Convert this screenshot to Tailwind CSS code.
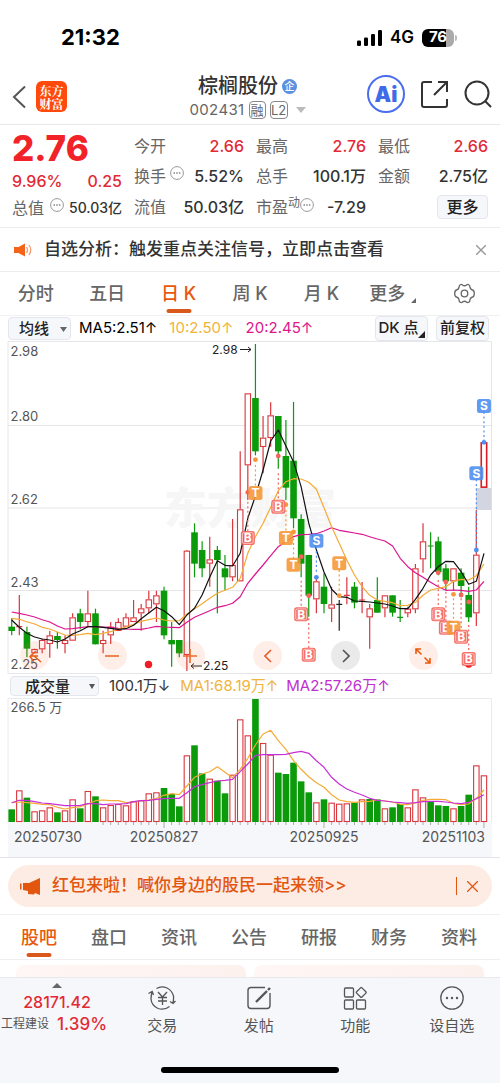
<!DOCTYPE html>
<html lang="zh-CN">
<head>
<meta charset="utf-8">
<meta name="viewport" content="width=device-width, initial-scale=1">
<title>棕榈股份 002431</title>
<script src="https://cdn.jsdelivr.net/npm/@tailwindcss/browser@4"></script>
</head>
<body class="bg-white font-['Inter','Noto_Sans_CJK_SC',sans-serif] text-[#333]">
<div class="flex min-h-screen flex-col">

  <!-- Status bar -->
  <div class="flex h-[75px] items-center justify-between pr-[43px] pl-[61px] text-black">
    <span class="text-[22px] font-bold">21:32</span>
    <div class="flex items-center gap-2">
      <svg class="h-4 w-[25px]" viewBox="0 0 25 16"><rect x="0" y="10.500" width="4" height="5.500" rx="1.300"/><rect x="7" y="7.500" width="4" height="8.500" rx="1.300"/><rect x="14" y="4" width="4" height="12" rx="1.300"/><rect x="21" y="0" width="4" height="16" rx="1.300"/></svg>
      <span class="text-[17px] font-semibold">4G</span>
      <div class="flex items-center gap-px">
        <span class="flex h-[18px] w-8 items-center justify-center rounded-md bg-linear-to-r from-black from-76% to-[#aaa] to-76% text-[15px] font-bold text-white">76</span>
        <span class="h-1.5 w-0.5 rounded-r bg-[#bbb]"></span>
      </div>
    </div>
  </div>

  <!-- Title bar -->
  <header class="flex h-[50px] items-start justify-between border-b border-[#e8e8ec] pr-2 pl-3">
    <div class="flex w-[116px] items-center gap-2.5 pt-1.5">
      <button aria-label="返回"><svg class="h-6 w-3.5" viewBox="0 0 14 24" fill="none" stroke="#555" stroke-width="2"><path d="M13 1.500 2 12l11 10.500"/></svg></button>
      <a href="#" class="flex size-[31px] flex-col items-center justify-center rounded-md bg-[#ff4a0c] font-['Noto_Serif_CJK_SC','Noto_Sans_CJK_SC',serif] text-[12px] leading-[13px] font-bold text-white"><span>东方</span><span>财富</span></a>
    </div>
    <div class="flex flex-col items-center">
      <h1 class="flex items-center gap-1 text-xl leading-[22px] font-medium">棕榈股份<span class="flex size-[15px] items-center justify-center rounded-full bg-[#5b8fe0] text-[10px] leading-none text-white">企</span></h1>
      <div class="mt-1 flex items-center gap-1 text-[15px] leading-[18px] text-[#666]"><span class="tracking-wide">002431</span>
        <span class="flex h-[18px] w-[17px] items-center justify-center rounded-sm border border-[#888] text-[13px]">融</span><span class="flex h-[18px] w-[18px] items-center justify-center rounded-sm border border-[#888] text-[13px]">L2</span>
        <svg class="ml-1 h-1.5 w-2.5" viewBox="0 0 10 6" fill="#bbb"><path d="M0 0h10L5 6z"/></svg>
      </div>
    </div>
    <div class="flex items-center gap-4">
      <button aria-label="Ai 助手" class="flex size-[38px] items-center justify-center rounded-full border-2 border-[#4a6df0] text-[21px] leading-none font-black text-[#3f6ae8]">Ai</button>
      <button aria-label="分享"><svg class="size-[27px]" viewBox="0 0 27 27" fill="none" stroke="#333" stroke-width="2"><path d="M11 1H3Q1 1 1 3v21q0 2 2 2h21q2 0 2-2v-6M17 1h9v10M26 1 13 14"/></svg></button>
      <button aria-label="搜索"><svg class="size-7" viewBox="0 0 28 28" fill="none" stroke="#333" stroke-width="2"><circle cx="13" cy="13" r="11.500"/><path d="m21 21 6 6"/></svg></button>
    </div>
  </header>

  <!-- Quote -->
  <section class="grid h-[103px] grid-cols-4 gap-3 border-b border-[#ececf0] px-3 pt-1 text-base text-[#333]">
    <div>
      <div class="flex h-[38px] items-center text-[35px] leading-none font-extrabold text-[#f12228]">2.76</div>
      <div class="flex h-[27px] items-center justify-between font-medium text-[#e22a35]"><span>9.96%</span><span>0.25</span></div>
      <div class="flex h-[27px] items-center justify-between whitespace-nowrap"><span class="text-[#666]">总值</span><svg class="mb-1.5 size-3.5" viewBox="0 0 14 14"><circle cx="7" cy="7" r="6.400" fill="none" stroke="#999"/><path d="M3.500 7h1.500m1.200 0h1.500m1.200 0h1.500" stroke="#888" stroke-width="1.400"/></svg><span class="text-[14px] font-medium">50.03亿</span></div>
    </div>
    <div>
      <div class="flex h-[33px] items-center justify-between"><span class="text-[#666]">今开</span><span class="font-medium text-[#e22a35]">2.66</span></div>
      <div class="flex h-7 items-center justify-between"><span class="flex items-center gap-1 text-[#666]">换手<svg class="mb-1.5 size-3.5" viewBox="0 0 14 14"><circle cx="7" cy="7" r="6.400" fill="none" stroke="#999"/><path d="M3.500 7h1.500m1.200 0h1.500m1.200 0h1.500" stroke="#888" stroke-width="1.400"/></svg></span><span class="font-medium">5.52%</span></div>
      <div class="flex h-[33px] items-center justify-between"><span class="text-[#666]">流值</span><span class="font-medium">50.03亿</span></div>
    </div>
    <div>
      <div class="flex h-[33px] items-center justify-between"><span class="text-[#666]">最高</span><span class="font-medium text-[#e22a35]">2.76</span></div>
      <div class="flex h-7 items-center justify-between"><span class="text-[#666]">总手</span><span class="font-medium">100.1万</span></div>
      <div class="flex h-[33px] items-center justify-between"><span class="flex items-center text-[#666]">市盈<span class="mb-2 text-[12px] leading-none">动</span><svg class="mb-1 size-3.5" viewBox="0 0 14 14"><circle cx="7" cy="7" r="6.400" fill="none" stroke="#999"/><path d="M3.500 7h1.500m1.200 0h1.500m1.200 0h1.500" stroke="#888" stroke-width="1.400"/></svg></span><span class="font-medium">-7.29</span></div>
    </div>
    <div>
      <div class="flex h-[33px] items-center justify-between"><span class="text-[#666]">最低</span><span class="font-medium text-[#e22a35]">2.66</span></div>
      <div class="flex h-7 items-center justify-between"><span class="text-[#666]">金额</span><span class="font-medium">2.75亿</span></div>
      <div class="flex h-[33px] items-center justify-end"><button class="h-6 w-[51px] rounded-sm border border-[#e4e6ee] bg-[#f6f7fb] leading-none font-medium text-[#222]">更多</button></div>
    </div>
  </section>

  <!-- Signal notice -->
  <section class="flex h-11 items-center border-b border-[#ececf0] px-3.5">
    <svg class="h-4 w-[18px]" viewBox="0 0 18 16"><path d="M0 5h4.500L11 1.500v13L4.500 11H0z" fill="#f4631a"/><path d="M12.500 5q2 3 0 6M15 3q3.400 5 0 10" fill="none" stroke="#f79a6a" stroke-width="1.300"/></svg>
    <a href="#" class="ml-3 text-[17px] font-medium text-[#333]">自选分析：触发重点关注信号，立即点击查看</a>
    <button aria-label="关闭" class="ml-auto"><svg class="size-2.5" viewBox="0 0 10 10" stroke="#999" stroke-width="1.400"><path d="m0 0 10 10M10 0 0 10"/></svg></button>
  </section>

  <!-- Period tabs -->
  <nav class="grid h-11 grid-cols-7 border-b border-[#f0f0f3] text-[18px] font-medium text-[#666]">
    <button>分时</button>
    <button>五日</button>
    <button class="relative text-[#e8590c]">日 K<span class="absolute bottom-0.5 left-1/2 h-1 w-[25px] -translate-x-1/2 rounded-full bg-[#d9591a]"></span></button>
    <button>周 K</button>
    <button>月 K</button>
    <button class="flex items-center justify-center gap-1.5">更多<svg class="mt-3.5 size-[5px]" viewBox="0 0 5 5" fill="#666"><path d="M5 0v5H0z"/></svg></button>
    <button aria-label="设置" class="flex items-center justify-center"><svg class="size-[21px]" viewBox="0 0 21 21" fill="none" stroke="#666" stroke-width="1.300"><path d="M6.200 1.800Q7.500 1 8.500 2q2 1.500 4 0 1-1 2.300-.200Q16 2.500 16 4.500q.5 2 2.500 2.500 1.800.500 1.800 3.500t-1.800 3.500q-2 .5-2.500 2.500 0 2-1.200 2.700-1.300.8-2.300-.2-2-1.500-4 0-1 1-2.300.2Q5 18.500 5 16.500 4.500 14.500 2.500 14 .700 13.500.700 10.500T2.500 7Q4.500 6.500 5 4.500q0-2 1.200-2.700z"/><circle cx="10.500" cy="10.500" r="3.300"/></svg></button>
  </nav>

  <!-- Moving average bar -->
  <div class="flex h-[25px] items-center pr-[11px] pl-2 text-[15px] whitespace-nowrap">
    <span class="relative">
      <select aria-label="指标" class="h-[23px] w-[63px] appearance-none rounded-sm border border-[#e4e6ee] bg-[#f6f7fb] pl-2.5 text-[15px] leading-none font-medium text-[#222]"><option>均线</option></select>
      <svg class="pointer-events-none absolute top-2.5 right-1 h-[5px] w-[7px]" viewBox="0 0 7 5" fill="#666"><path d="M0 0h7L3.500 5z"/></svg>
    </span>
    <span class="ml-2 text-black">MA5:2.51↑</span>
    <span class="ml-3 text-[#efb43c]">10:2.50↑</span>
    <span class="ml-3 text-[#e0158c]">20:2.45↑</span>
    <button class="relative ml-auto h-[25px] w-[53px] rounded-sm border border-[#e4e6ee] bg-[#f6f7fb] pr-1.5 font-medium text-[#222]">DK 点<svg class="absolute right-0.5 bottom-0.5 size-[7px]" viewBox="0 0 7 7" fill="#222"><path d="M7 0v7H0z"/></svg></button>
    <button class="ml-2 h-[25px] w-[53px] rounded-sm border border-[#e4e6ee] bg-[#f6f7fb] font-medium text-[#222]">前复权</button>
  </div>

  <!-- Candlestick chart -->
  <div class="relative">
    <svg id="kline" class="block w-full" viewBox="0 1 500 333" role="img" aria-label="日K线图" font-size="13"></svg>
    <div class="absolute right-[62px] bottom-1 left-5 flex justify-between">
      <button aria-label="重置" class="flex size-[29px] items-center justify-center rounded-full bg-[#f4713a]/12"><svg class="size-4" viewBox="0 0 16 16" fill="none" stroke="#e8590c" stroke-width="1.400"><path d="M9 3 3 8.500l4 5M3 8h8M7 8l7 6"/></svg></button>
      <button aria-label="缩小" class="flex size-[29px] items-center justify-center rounded-full bg-[#f4713a]/12"><span class="h-[2px] w-3.5 bg-[#ef8450]"></span></button>
      <button aria-label="放大" class="flex size-[29px] items-center justify-center rounded-full bg-[#f4713a]/12"><svg class="size-3.5" viewBox="0 0 14 14" stroke="#ef6a2a" stroke-width="1.600"><path d="M0 7h14M7 0v14"/></svg></button>
      <button aria-label="向左" class="flex size-[29px] items-center justify-center rounded-full bg-[#f4713a]/12"><svg class="h-3.5 w-2" viewBox="0 0 8 14" fill="none" stroke="#e0602a" stroke-width="1.600"><path d="M7 1 1 7l6 6"/></svg></button>
      <button aria-label="向右" class="flex size-[29px] items-center justify-center rounded-full bg-[#e8e8e8]/90"><svg class="h-3.5 w-2" viewBox="0 0 8 14" fill="none" stroke="#555" stroke-width="1.600"><path d="m1 1 6 6-6 6"/></svg></button>
      <button aria-label="全屏" class="flex size-[29px] items-center justify-center rounded-full bg-[#f4713a]/12"><svg class="size-4" viewBox="0 0 16 16" fill="none" stroke="#e8590c" stroke-width="1.600"><path d="M1 6V1h5M1 1l5.500 5.500M15 10v5h-5M15 15 9.500 9.500"/></svg></button>
    </div>
  </div>

  <!-- Volume bar -->
  <div class="flex h-6 items-center pl-2.5 text-[15px] whitespace-nowrap">
    <span class="relative">
      <select aria-label="副图指标" class="block h-5 w-[89px] appearance-none rounded-sm border border-[#e4e6ee] bg-[#f6f7fb] pl-3.5 text-[15px] leading-none font-medium text-[#222]"><option>成交量</option></select>
      <svg class="pointer-events-none absolute top-2 right-1 h-[5px] w-[6px]" viewBox="0 0 6 5" fill="#555"><path d="M0 0h6L3 5z"/></svg>
    </span>
    <span class="ml-2.5">100.1万↓</span>
    <span class="ml-2.5 text-[#efb43c]">MA1:68.19万↑</span>
    <span class="ml-2 text-[#c02fd0]">MA2:57.26万↑</span>
  </div>
  <svg id="volume" class="block w-full border-b border-[#e4e4e8]" viewBox="0 28 500 159" role="img" aria-label="成交量图" font-size="13"></svg>

  <!-- Promotion -->
  <div class="border-b border-[#efeff2] px-2 py-[7px]">
    <div class="flex h-[42px] items-center rounded-full bg-[#fdece4] pr-3.5 pl-3 text-[#e2560f]">
      <svg class="h-[17px] w-5" viewBox="0 0 20 17" fill="#e2560f"><path d="M0 5.500h1.500v6H0zM3 5h6l11-5v17l-5-2-1 1.500-6-.500V13l-5-1z"/></svg>
      <a href="#" class="ml-3 text-[17px] font-medium">红包来啦！喊你身边的股民一起来领&gt;&gt;</a>
      <span class="ml-auto h-[18px] w-px bg-[#e2560f]"></span>
      <button aria-label="关闭" class="ml-2.5"><svg class="size-[11px]" viewBox="0 0 11 11" stroke="#e2560f" stroke-width="1.300"><path d="m0 0 11 11M11 0 0 11"/></svg></button>
    </div>
  </div>

  <!-- Content tabs -->
  <nav class="grid h-[45px] grid-cols-7 border-b border-[#efeff2] pr-1.5 pl-1 text-[18px] font-medium text-[#666]">
    <button class="relative text-[#e8590c]">股吧<span class="absolute bottom-0.5 left-1/2 h-1 w-[25px] -translate-x-1/2 rounded-full bg-[#d9591a]"></span></button>
    <button>盘口</button>
    <button>资讯</button>
    <button>公告</button>
    <button>研报</button>
    <button>财务</button>
    <button>资料</button>
  </nav>
  <div class="grid h-[17px] grid-cols-2 gap-2 px-4 pt-[5px]">
    <div class="rounded-t-lg bg-linear-to-r from-[#fff7f5] to-[#fdf1ee]"></div>
    <div class="rounded-t-lg bg-linear-to-r from-[#fff7f5] to-[#fdf1ee]"></div>
  </div>

  <!-- Bottom bar -->
  <footer class="flex grow flex-col border-t border-[#e8e8ee] bg-[#f6f7fb]">
    <nav class="flex h-[58px] text-[15px] text-[#555]">
      <button class="flex w-[114px] flex-col items-center pt-[5px] whitespace-nowrap">
        <svg class="h-[5px] w-2.5" viewBox="0 0 10 5" fill="#666"><path d="M5 0l5 5H0z"/></svg>
        <span class="mt-1.5 text-[16px] leading-4 font-medium text-[#e22a35]">28171.42</span>
        <span class="mt-1.5 flex w-full items-center gap-2 pl-px text-[12px] leading-4">工程建设<span class="text-[17px] font-medium text-[#e22a35]">1.39%</span></span>
      </button>
      <button class="flex flex-1 flex-col items-center gap-1.5 pt-2"><svg class="h-6 w-7" viewBox="0 0 28 24" fill="none" stroke="#555" stroke-width="1.300"><path d="M8.500 2.500q5-3 10.500-.5 5 2.500 6.500 8 .3 3-.5 7M21.500 20.500q-5 4-11.500 2-6.500-3-7-9.500 0-4 1.200-7.500M.500 7.500 4.200 5.500 5.500 9M22 15.500l3 2 2.500-2.500M10 6l4.500 5L19 6M10 11.500h9M10 15h9M14.500 11v8"/></svg><span class="leading-5">交易</span></button>
      <button class="flex flex-1 flex-col items-center gap-1.5 pt-2"><svg class="size-6" viewBox="0 0 24 24" fill="none" stroke="#555" stroke-width="1.400"><path d="M18 1.500H4Q1 1.500 1 4.500v15q0 3 3 3h16q3 0 3-3V7"/><path d="M9 16 20 5" stroke-width="2.400"/><path d="m21 4 2-2" stroke-width="2.400"/></svg><span class="leading-5">发帖</span></button>
      <button class="flex flex-1 flex-col items-center gap-1.5 pt-2"><svg class="size-6" viewBox="0 0 24 24" fill="none" stroke="#555" stroke-width="1.300"><rect x="1.500" y="2" width="9" height="9" rx="1"/><rect x="1.500" y="14" width="9" height="9" rx="1"/><rect x="13.500" y="14" width="9" height="9" rx="1"/><rect x="14.500" y="2.700" width="7.500" height="7.500" rx="1" transform="rotate(45 18.250 6.450)"/></svg><span class="leading-5">功能</span></button>
      <button class="flex flex-1 flex-col items-center gap-1.5 pt-2"><svg class="size-6" viewBox="0 0 24 24"><circle cx="12" cy="12" r="11.200" fill="none" stroke="#555" stroke-width="1.300"/><g fill="#555"><circle cx="7" cy="12" r="1.200"/><circle cx="12" cy="12" r="1.200"/><circle cx="17" cy="12" r="1.200"/></g></svg><span class="leading-5">设自选</span></button>
    </nav>
    <div class="mx-auto mt-auto mb-2.5 h-1.5 w-[178px] rounded-full bg-black"></div>
  </footer>
</div>

<script>
const RED = '#d9363e', GREEN = '#0a9a0a';
// Data heights are stored in thirds of a drawing unit.
const X = i => 11.7 + 7.617 * i;
const Y = v => v / 3;
// kind, high, body top, body bottom, low; equal body values draw a doji
const candles = [
['g',835,860,873,886],['r',765,860,860,886],['g',860,876,926,952],['r',926,927,940,940],['r',896,900,928,940],['r',872,886,912,953],['g',876,888,900,926],['r',886,900,912,940],['r',820,832,902,902],['g',806,820,846,868],
['r',752,820,846,860],['g',806,820,913,913],['r',872,900,912,940],['r',846,860,886,912],['r',835,846,873,873],['r',820,832,860,860],['r',780,832,846,846],['r',792,805,820,872],['r',752,778,805,820],['r',752,766,793,846],
['g',740,752,886,898],['g',846,900,913,980],['g',900,900,940,952],['r',630,632,945,993],['g',550,577,671,712],['g',604,630,685,712],['r',590,658,671,740],['g',618,630,660,820],['g',645,685,712,750],['r',537,675,712,724],
['r',334,508,724,724],['r',160,160,376,480],['g',12,174,334,346],['r',228,293,321,400],['r',187,226,294,320],['g',228,228,334,386],['g',240,348,443,480],['g',186,362,535,565],['g',523,537,671,712],['g',645,645,767,830],
['r',710,724,778,820],['g',700,740,792,820],['r',740,793,806,846],['k',780,793,793,872],['r',712,766,766,793],['g',726,740,788,805],['r',726,780,780,820],['r',792,805,832,926],['g',712,780,818,818],['r',766,766,805,832],
['g',766,766,818,830],['g',780,832,832,846],['r',800,806,820,832],['r',672,685,808,820],['r',550,604,658,698],['g',577,618,618,685],['g',590,604,696,706],['g',672,685,724,750],['r',685,685,724,752],['g',685,698,738,765],
['g',740,765,832,846],['r',510,644,820,858],['R',307,307,443,443]];
const ma5 = [840,862,880,891,897,900,906,897,882,872,860,860,862,865,868,866,856,836,819,802,812,830,854,825,805,765,712,662,676,678,640,535,468,390,303,270,318,365,440,550,630,696,748,770,772,783,784,786,789,792,798,806,806,778,745,705,680,664,665,695,733,724,640];
const ma10 = [835,838,845,852,862,867,876,885,886,884,880,884,880,875,867,861,853,844,839,834,840,843,842,822,806,791,775,760,751,742,715,640,590,550,502,452,425,416,417,427,448,503,560,610,660,705,740,766,780,784,788,797,796,787,766,750,745,740,724,718,720,707,672];
const ma20 = [816,820,825,831,839,846,858,867,866,863,860,860,861,862,865,867,868,868,864,859,861,862,863,847,832,822,812,802,797,790,770,730,702,675,647,620,604,590,584,583,581,573,563,571,575,579,583,590,597,603,618,655,680,698,712,727,740,751,750,751,754,750,724];
const volumes = [418,361,383,424,421,412,427,421,388,415,363,379,412,405,402,406,394,391,370,367,354,372,409,256,226,310,326,332,370,314,148,196,87,219,254,308,312,278,334,367,397,388,398,401,400,398,388,387,388,415,412,402,412,358,382,394,406,408,415,408,374,286,316];
// Bars whose colour is not that of their candle
const barKind = {26:'r',43:'r',44:'r',45:'g',46:'r',47:'g',55:'g'};
const vma1 = [398,396,398,400,403,404,412,417,413,410,402,392,390,392,392,398,396,392,390,385,376,371,374,348,322,312,305,290,307,323,298,265,225,192,181,212,238,272,298,320,338,352,374,390,395,397,395,394,390,393,396,403,404,399,391,388,388,389,400,404,402,385,360];
const vma2 = [398,391,391,395,399,401,404,407,407,406,401,401,404,402,402,401,395,392,391,388,386,385,385,368,350,344,338,333,331,328,305,282,256,254,254,254,253,248,244,250,272,292,322,342,357,367,375,385,391,393,396,398,400,398,395,394,394,396,399,401,397,386,374];
// letter, candle index, label centre, dot, first and last end of the dotted line
const signals = [
['B',31,594,457,485,575],['T',32,459,359,375,440],['B',35,500,348,400,480],['T',36,594,494,510,575],['T',37,674,576,595,655],['S',40,602,712,620,700],['B',38,823,650,722,805],['B',39,944,767,835,925],['T',43,670,767,690,755],
['S',62,198,307,216,300],['S',61,400,630,418,620],['B',56,823,698,720,805],['B',57,863,726,755,845],['T',58,863,763,775,845],['B',59,890,765,775,872],['B',60,957,786,855,938]];
const hue = {B:'#f4625a', T:'#f6983a', S:'#4f8ff0'};
const line = (d, c, w = 1.2) => `<path d="M${d.map((v, i) => X(i).toFixed(1) + ' ' + Y(v).toFixed(1)).join('L')}" fill="none" stroke="${c}" stroke-width="${w}" stroke-linejoin="round"/>`;
const sans = 'Inter, sans-serif';

let s = '<path d="M8 1.500H491.500V333.500H8ZM8 85.500H491.500M8 168H491.500M8 250.500H491.500" fill="none" stroke="#e6e6ea"/>';
s += '<text x="164" y="184" font-size="43" font-weight="900" fill="#f6f6f7" font-family="Noto Sans CJK SC, sans-serif">东方财富</text>';
s += '<rect x="476" y="148" width="15.500" height="22" fill="#d3d6e0"/>';
candles.forEach(([k, h, t, b, l], i) => {
  const x = X(i), c = k === 'g' ? GREEN : k === 'k' ? '#222' : RED;
  if (t === b) s += `<path d="M${x} ${Y(h)}V${Y(l)}M${x - 3} ${Y(t)}h6" stroke="${c}" stroke-width="1.2"/>`;
  else if (k === 'g') s += `<path d="M${x} ${Y(h)}V${Y(l)}" stroke="${c}" stroke-width="1.2"/><rect x="${x - 3.3}" y="${Y(t)}" width="6.600" height="${Y(b - t)}" fill="${c}"/>`;
  else s += `<path d="M${x} ${Y(h)}V${Y(t)}M${x} ${Y(b)}V${Y(l)}" stroke="${c}" stroke-width="1.2"/><rect x="${x - 2.7}" y="${Y(t) + .5}" width="5.400" height="${Y(b - t) - 1}" fill="#fff" stroke="${k === 'R' ? '#e01820' : c}" stroke-width="${k === 'R' ? 1.6 : 1.1}"/>`;
});
s += line(ma20, '#dc1490') + line(ma10, '#f5ab35') + line(ma5, '#111');
s += '<circle cx="148.500" cy="324.500" r="3.700" fill="#f01c24"/><circle cx="468.700" cy="324" r="3.700" fill="#f01c24"/>';
signals.forEach(([c, i, y, dot, a, b]) => {
  s += `<circle cx="${X(i)}" cy="${Y(dot)}" r="2.400" fill="${hue[c]}"/><path d="M${X(i)} ${Y(a)}V${Y(b)}" stroke="${hue[c]}" stroke-width="1.2" stroke-dasharray="2 2.600"/>`;
});
signals.forEach(([c, i, y]) => {
  const x = X(i), f = c === 'B';
  s += `<rect x="${x - 7}" y="${Y(y) - 7}" width="14" height="14" rx="2.500" fill="${hue[c]}" opacity=".9"/>`;
  if (f) s += `<rect x="${x - 5.4}" y="${Y(y) - 5.4}" width="10.800" height="10.800" rx="1.500" fill="none" stroke="#ffd9d5" stroke-width=".8"/>`;
  s += `<text x="${x}" y="${Y(y) + 4.3}" text-anchor="middle" font-size="12" font-weight="700" fill="#fff" font-family="${sans}">${c}</text>`;
});
[['2.98',16],['2.80',81],['2.62',164],['2.43',247],['2.25',329]].forEach(([t, y]) => s += `<text x="10.500" y="${y}" fill="#555" font-family="${sans}">${t}</text>`);
s += `<g fill="#222" font-size="12" font-family="${sans}"><text x="212" y="14">2.98</text><text x="203" y="330">2.25</text></g>`;
s += '<path d="M240 9.500h11m-3-2.500 3 2.500-3 2.500M202 326h-11m3-2.500-3 2.500 3 2.500" fill="none" stroke="#222"/>';
document.getElementById('kline').innerHTML = s;

let v = '<rect x="8" y="152" width="484" height="35" fill="#f6f7fb"/><path d="M8 152V28.500H491.500V152" fill="none" stroke="#eaeaee"/>';
volumes.forEach((t, i) => {
  const x = X(i), g = (barKind[i] || candles[i][0]) === 'g';
  v += g ? `<rect x="${x - 3.3}" y="${Y(t)}" width="6.600" height="${Y(456 - t)}" fill="${GREEN}"/>`
         : `<rect x="${x - 2.7}" y="${Y(t) + .5}" width="5.400" height="${Y(456 - t) - 1}" fill="#fff" stroke="${RED}" stroke-width="1.1"/>`;
  if (i > 11) v += `<path d="M${x} 152v${[20, 41, 62].includes(i) ? 6 : 3}" stroke="#aaa"/>`;
});
v += line(vma1, '#f5ab35') + line(vma2, '#c82fd6');
v += `<text x="10.500" y="42" fill="#555" font-family="Inter, Noto Sans CJK SC, sans-serif">266.5 万</text>`;
[['20250730',14,'start'],['20250827',164,'middle'],['20250925',324,'middle'],['20251103',485,'end']].forEach(([t, x, a]) => v += `<text x="${x}" y="172" text-anchor="${a}" fill="#555" font-size="14" font-family="${sans}">${t}</text>`);
document.getElementById('volume').innerHTML = v;
</script>
</body>
</html>
